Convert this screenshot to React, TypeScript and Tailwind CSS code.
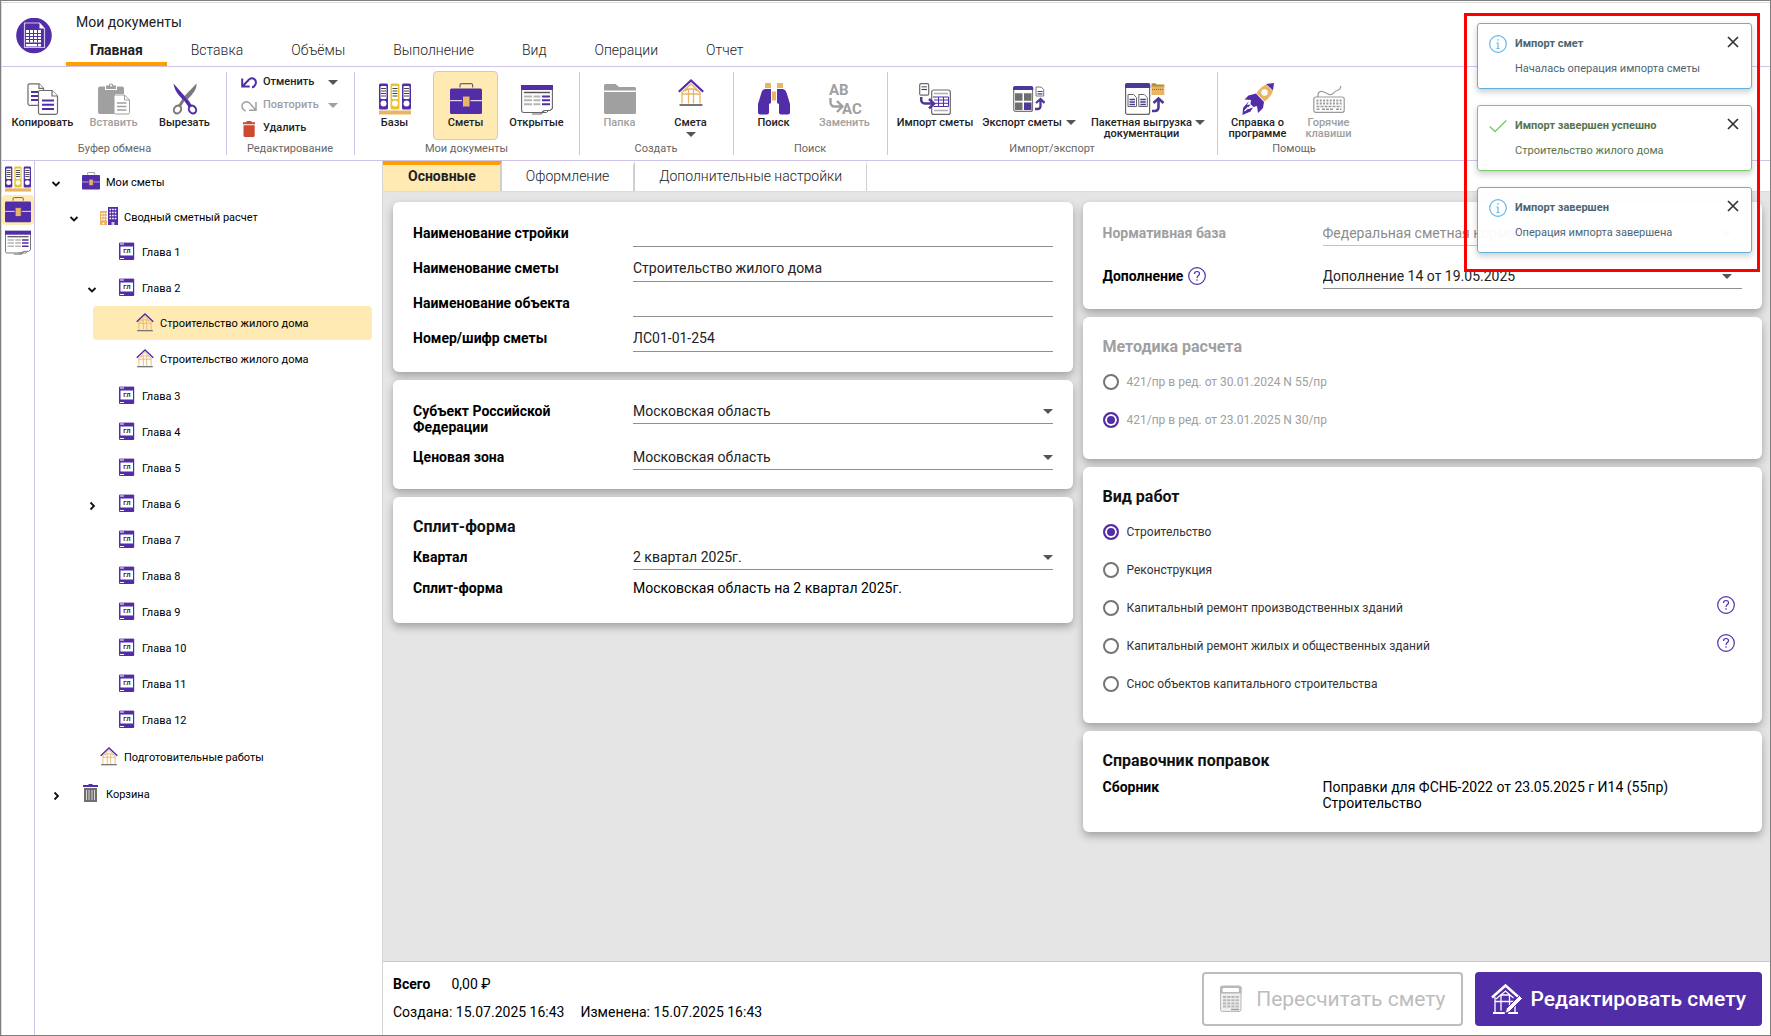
import { useState, type ReactNode } from "react";
import clsx from "clsx";

/* ---------- icons ---------- */

const Logo = () => (
  <svg viewBox="0 0 36 36" className="size-9">
    <circle cx="18" cy="17.5" r="17.8" fill="#512da8" />
    <path d="M8.5 5h15l5 5.5v19h-20z" fill="none" stroke="#cfc3ea" strokeWidth="1.2" />
    <path d="M23.5 5l5 5.5h-5z" fill="#fff" />
    <path d="M10 12h15v12.5h-15zM10 26h15v2.5h-15z" fill="#fff" />
    <path
      d="M10 15.5h15M10 18.5h15M10 21.5h15M13.5 12v12.5M17.5 12v12.5M21.5 12v12.5M21.5 26v2.5"
      stroke="#512da8"
      strokeWidth="1"
    />
  </svg>
);

const CopyIcon = () => (
  <svg viewBox="0 0 32 32" className="size-8" fill="#fff" stroke="#6b6b6b" strokeWidth="1.2">
    <path d="M2.500 .8h9.500l4.500 4.500v17h-14a1.500 1.500 0 0 1-1.500-1.500v-18.500a1.500 1.500 0 0 1 1.500-1.500z" />
    <path d="M12 .8v4.500h4.500" />
    <path d="M4 9h7M4 13h7M4 17h7" stroke="#512da8" strokeWidth="2" />
    <path d="M13 7.500h12l5.500 5.500v16.500a1.800 1.800 0 0 1-1.800 1.800h-15.700a1.500 1.500 0 0 1-1.500-1.500v-20.800a1.500 1.500 0 0 1 1.500-1.500z" />
    <path d="M25 7.500v5.500h5.500" />
    <path d="M15 17.500h12M15 21.800h12M15 26h12" stroke="#512da8" strokeWidth="2" />
  </svg>
);

const PasteIcon = () => (
  <svg viewBox="0 0 32 32" className="size-8">
    <path d="M0 5.500a2 2 0 0 1 2-2h5v3.500h12v-3.500h5a2 2 0 0 1 2 2v5.500h-9v20h-15a2 2 0 0 1-2-2z" fill="#a0a0a0" />
    <path d="M8 6v-3.500h2.500a2.600 2.600 0 0 1 5 0h2.500v3.500z" fill="#a0a0a0" />
    <circle cx="13" cy="2.5" r="1" fill="#fff" />
    <path d="M17.500 12h9l5 5v12.500a1.500 1.500 0 0 1-1.500 1.500h-12.500a1.500 1.500 0 0 1-1.500-1.500v-16a1.500 1.500 0 0 1 1.500-1.500z" fill="#fff" stroke="#a0a0a0" />
    <path d="M26.500 12v5h5" fill="none" stroke="#a0a0a0" />
    <path d="M19 20h9.500M19 23.500h9.500M19 27h9.500" stroke="#a0a0a0" strokeWidth="1.5" />
  </svg>
);

const CutIcon = () => (
  <svg viewBox="0 0 32 32" className="size-8">
    <path d="M27.500 .5c.5 5-3 10-9 16l-3-3.500z" fill="#7a7a7a" />
    <path d="M15 16l-4.500 7" stroke="#7a7a7a" strokeWidth="3" />
    <ellipse cx="8.5" cy="26.5" rx="3.4" ry="4.2" transform="rotate(35 8.5 26.5)" fill="none" stroke="#7a7a7a" strokeWidth="2" />
    <path d="M4.500 .5l15.500 17.500 3 5-3 1.500-5-7c-6-5.500-9.500-10-10.500-17z" fill="#512da8" />
    <ellipse cx="23.5" cy="26.5" rx="3.4" ry="4.2" transform="rotate(-35 23.5 26.5)" fill="none" stroke="#512da8" strokeWidth="2" />
  </svg>
);

const UndoIcon = () => (
  <svg viewBox="0 0 16 14" className="h-3.5 w-4" fill="none" stroke="currentColor" strokeWidth="2">
    <path d="M1.200 2.500v8h7.500M1.800 10l6.200-6.500c4-3 8 .5 6.600 4.500-.6 2-1.800 3-3.600 3.500" />
  </svg>
);

const RedoIcon = () => (
  <svg viewBox="0 0 16 14" className="h-3.5 w-4" fill="none" stroke="currentColor" strokeWidth="1.5">
    <path d="M15 3v8.200H8M14.500 10.800L8.500 4c-4-3-8.500.5-7.300 4.500.6 2 1.500 2.800 3.300 3.500" />
  </svg>
);

const DeleteIcon = () => (
  <svg viewBox="0 0 14 16" className="h-4 w-3.5" fill="#cd4a30">
    <path d="M4.500 0h5v1.200h3.500v2h-12v-2h3.500zM1.500 4.200h11.200v10.300a1.500 1.500 0 0 1-1.500 1.500h-8.200a1.500 1.500 0 0 1-1.500-1.500z" />
  </svg>
);

const Binder = ({ x, color }: { x: number; color: string }) => (
  <g transform={`translate(${x} 0)`}>
    <rect y=".5" width="9" height="26" rx="1.5" fill={color} />
    <rect x="1.5" y="3" width="6" height="13" rx="1" fill="#fff" />
    <path d="M2 5.500h5M2 8h5M2 10.500h5M2 13h5" stroke="#444" strokeWidth="1.2" />
    <circle cx="4.5" cy="20.5" r="3" fill="#fff" />
  </g>
);

const BindersIcon = ({ className }: { className: string }) => (
  <svg viewBox="0 0 32 32" className={className}>
    <Binder x={0} color="#512da8" />
    <Binder x={11.5} color="#ebc32d" />
    <Binder x={23} color="#512da8" />
    <rect y="27.5" width="32" height="4" fill="#e9b565" />
  </svg>
);

const BriefcaseIcon = ({ className }: { className: string }) => (
  <svg viewBox="0 0 32 32" className={className}>
    <path d="M10 4.500v-2.500a1.300 1.300 0 0 1 1.300-1.300h10a1.300 1.300 0 0 1 1.300 1.300v2.500" fill="none" stroke="#666" strokeWidth="1.2" />
    <rect y="5.5" width="32" height="25.5" rx="1.5" fill="#512da8" />
    <path d="M0 17.700h32" stroke="#fff" strokeWidth="1" />
    <rect x="12.5" y="13" width="7.5" height="11" rx="1" fill="#e9b565" stroke="#512da8" />
  </svg>
);

const OpenedIcon = ({ className }: { className: string }) => (
  <svg viewBox="0 0 32 32" className={className}>
    <path d="M.6 5v22.500a2 2 0 0 0 2 2h18l3-2h5.500l2.300-2v-20.500z" fill="#fff" stroke="#666" strokeWidth="1.1" />
    <path d="M11 31h9.500l2-3.500M17 29.500h8.500l2-2" fill="none" stroke="#666" />
    <path d="M0 2h32v5h-32z" fill="#512da8" />
    <path d="M3 9.500h26" stroke="#555" strokeWidth="1.5" />
    <path d="M3 13.500h8M12.500 13.500h7M3 17.300h8M12.500 17.300h7M3 21.200h8M12.500 21.200h7" stroke="#b5b5b5" strokeWidth="2" />
    <path d="M21 13.500h8M21 17.300h8M21 21.200h8" stroke="#512da8" strokeWidth="2" />
  </svg>
);

const FolderIcon = () => (
  <svg viewBox="0 0 32 32" className="size-8" fill="#a0a0a0">
    <path d="M0 2.500a1.500 1.500 0 0 1 1.500-1.500h10l3.500 3h15.500a1.500 1.500 0 0 1 1.500 1.500v2h-32z" />
    <path d="M0 9h32v20.500a1.500 1.500 0 0 1-1.500 1.500h-29a1.500 1.500 0 0 1-1.500-1.500z" />
  </svg>
);

const HouseIcon = ({ className, viewBox = "0 0 26 28" }: { className: string; viewBox?: string }) => (
  <svg viewBox={viewBox} className={clsx("overflow-visible", className)} fill="none">
    <path d="M4 12.500v12M22 12.500v12M4 15h18M10.500 10v14.500M15.500 10v14.500M4.500 13l8.500-8 8.500 8M7 12l3-2h6l3 2" stroke="#e9b565" strokeWidth="1.3" />
    <path d="M.8 12.800L13 1.500l12.200 11.300" stroke="#512da8" strokeWidth="2.2" />
    <path d="M1.500 26h23" stroke="#777" strokeWidth="2" />
  </svg>
);

const SearchIcon = () => (
  <svg viewBox="0 0 32 32" className="size-8">
    <path d="M7 0h6v5h-6zM19 0h6v5h-6zM14 8.500h4v9h-4z" fill="#e9b565" />
    <path d="M7 6h6v14l-2 1v8.500a2 2 0 0 1-2 2h-7a2 2 0 0 1-2-2v-8.500l3.500-11.500a5 5 0 0 1 3.500-3.500zM25 6h-6v14l2 1v8.500a2 2 0 0 0 2 2h7a2 2 0 0 0 2-2v-8.500l-3.500-11.500a5 5 0 0 0-3.500-3.500z" fill="#512da8" />
  </svg>
);

const ReplaceIcon = () => (
  <svg viewBox="0 0 32 32" className="size-8 overflow-visible" fill="#a0a0a0" fontFamily="Roboto, sans-serif" fontWeight="700" fontSize="15">
    <text x="0" y="12">AB</text>
    <text x="13" y="31">AC</text>
    <path d="M1.500 15v4.500a4 4 0 0 0 4 4h7M8 18l5.500 5.500-5.500 5.500" fill="none" stroke="#a0a0a0" strokeWidth="2.4" />
  </svg>
);

const ImportIcon = () => (
  <svg viewBox="0 0 32 32" className="size-8" fill="none" stroke="#6b6b6b" strokeWidth="1.2">
    <rect x=".7" y=".7" width="9" height="11.5" rx="1.2" />
    <path d="M2.500 3.800h5.500" />
    <path d="M2.500 6.500h5.500" stroke="#512da8" />
    <rect x="12.7" y="7" width="18.6" height="24.4" rx="2" fill="#fff" />
    <path d="M15 10.500h14M15 27.500h14" stroke="#b0b0b0" strokeWidth="1.5" />
    <path d="M14 14h15.500v9.500h-15M15 17h14.500M15 20.300h14.500M19.500 14v9.500M24.500 14v9.500" stroke="#512da8" strokeWidth="1" />
    <path d="M2.200 14v3a3.500 3.500 0 0 0 3.500 3.500h8M10 16l5 4.700-5 4.700" stroke="#4e3796" strokeWidth="2.5" />
  </svg>
);

const ExportIcon = () => (
  <svg viewBox="0 0 32 32" className="size-8">
    <rect x=".7" y="4" width="18.8" height="24.4" rx="2" fill="#fff" stroke="#777" strokeWidth="1.2" />
    <path d="M0 7v-2a2 2 0 0 1 2-2h16.300a2 2 0 0 1 2 2v2z" fill="#4e3796" />
    <path d="M2 10.300h7.500v7.500h-7.500zM11 10.300h7.500v7.500h-7.500zM2 19.500h7.500v7.500h-7.500z" fill="#6f6f6f" />
    <path d="M11 19.500h7.500v7.500h-7.500z" fill="#4e3796" />
    <path d="M23 4h5l2.700 2.500v6.500h-7.700z" fill="#fff" stroke="#777" />
    <path d="M24.500 8.500h5M24.500 10.800h5" stroke="#4e3796" strokeWidth="1.2" />
    <path d="M22 26h2.500c2.500 0 3-1.500 3-3v-6M23 20l4.500-4 4 4" fill="none" stroke="#4e3796" strokeWidth="2.3" />
  </svg>
);

const BatchIcon = () => (
  <svg viewBox="0 0 40 32" className="h-8 w-10">
    <rect x=".6" y=".7" width="24" height="30.7" rx="2" fill="#fff" stroke="#666" strokeWidth="1.2" />
    <path d="M0 5v-3a2 2 0 0 1 2-2h21.200a2 2 0 0 1 2 2v3z" fill="#4e3796" />
    <path d="M3 11.500h5.500l3 3v9h-8.500zM13.800 11.500h5.500l3 3v9h-8.500z" fill="#fff" stroke="#666" />
    <path d="M4.500 16.500h5.500M4.500 19h5.500M4.500 21.500h5.500M15.300 16.500h5.500M15.300 19h5.500M15.300 21.500h5.500" stroke="#4e3796" strokeWidth="1.3" />
    <path d="M26.500 .3h4l1.300 1.300h7.500v3h-12.800z" fill="#b98d3d" />
    <path d="M26.500 3.500h12.800v8.500h-12.800z" fill="#e9b565" />
    <path d="M27 6.500h12" stroke="#866b38" strokeDasharray="1 1" />
    <path d="M27 28h2.500c3.500 0 4-2 4-4v-8M28.500 20l5-4.500 5 4.500" fill="none" stroke="#4e3796" strokeWidth="2.6" />
  </svg>
);

const RocketIcon = () => (
  <svg viewBox="0 0 32 32" className="size-8">
    <path d="M32 0l-1 7.500-7-6.500z" fill="#512da8" />
    <path d="M24 1.500l7 6.500c-1.500 4-4.500 8-8.500 10.500l-8-8.500c2.500-4 6-7 9.500-8.500z" fill="#e9b565" />
    <circle cx="22.5" cy="9.5" r="3.2" fill="#fff" />
    <path d="M14 10.500l8 8.500-1 6-5 5-1-7-3.500 1-3-3 .5-4-6.500-.5 4-4z" fill="#512da8" />
    <path d="M7 18l-2 4 3.500-.5-3.500 5 6-2-2.500 4-8 3.500 .5-7z" fill="#512da8" />
    <path d="M2.500 28l4-4" stroke="#fff" strokeWidth="1.2" />
  </svg>
);

const KeyboardIcon = () => (
  <svg viewBox="0 0 32 32" className="size-8" fill="none" stroke="#9a9a9a" strokeWidth="1.2">
    <path d="M5 14v-2.500c0-3 3.500-4 6-2.500l5 2.500c4 1.500 5-3.500 8-4 2.500-.5 3.500-1.500 3.800-4.500" />
    <rect x=".8" y="14" width="30.4" height="15.3" rx="2" />
    <path d="M3.500 17.500h25M3.500 20.500h25" strokeWidth="2" strokeDasharray="2 1.3" />
    <path d="M3.500 23.500h25M3.500 26.200h3M9 26.200h11M23 26.200h5.500" strokeWidth="1.6" strokeDasharray="3 1" />
  </svg>
);

const BuildingsIcon = () => (
  <svg viewBox="0 0 18 18" className="size-[18px]">
    <path d="M0 4h7v14h-7z" fill="#e9b565" />
    <path d="M8 0h10v18h-10z" fill="#512da8" />
    <path d="M1 6.500h6M1 9.500h6M1 12.500h6M2.500 16.500h2.500" stroke="#fff" strokeWidth="1.6" strokeDasharray="1.6 .8" />
    <path d="M9.500 2.500h7.500M9.500 5.500h7.500M9.500 8.500h7.500M9.500 11.500h7.500" stroke="#fff" strokeWidth="1.6" strokeDasharray="1.6 1" />
    <path d="M11.500 15h3v3h-3z" fill="#cfc3ea" />
  </svg>
);

const ChapterIcon = () => (
  <svg viewBox="0 0 18 18" className="size-[18px]">
    <rect x="1" y=".5" width="15.2" height="17.5" rx="1" fill="#512da8" />
    <path d="M1 0h15" stroke="#cfc3ea" />
    <path d="M2 2h4M2 16.500h4" stroke="#fff" strokeWidth="1.2" />
    <rect x="2.5" y="4.5" width="12.5" height="9" fill="#fff" />
    <text x="8.8" y="11" textAnchor="middle" fontSize="6" fontWeight="700" fontFamily="Roboto, sans-serif" fill="#222">ГЛ</text>
  </svg>
);

const TrashIcon = () => (
  <svg viewBox="0 0 18 18" className="size-[18px]">
    <path d="M1 1h5.500v-1h4v1h5.500v2h-15z" fill="#512da8" />
    <path d="M2 4h13v14h-13z" fill="#6e6e6e" />
    <path d="M4.500 6v10M7 6v10M10 6v10M12.500 6v10" stroke="#d5d5d5" />
  </svg>
);

const CalculatorIcon = () => (
  <svg viewBox="0 0 22 28" className="h-7 w-[22px]">
    <rect x=".5" y="1" width="20.5" height="25.5" rx="2" fill="#eee" stroke="#b8b8b8" />
    <path d="M0 3a2 2 0 0 1 2-2h17.500a2 2 0 0 1 2 2v5.500h-21.500z" fill="#b8b8b8" />
    <rect x="2.5" y="3" width="16.5" height="4" rx="1" fill="#fff" />
    <path d="M3 12h16M3 15.200h16M3 18.400h16M3 21.600h16" stroke="#b8b8b8" strokeWidth="2" strokeDasharray="3.2 1" />
    <path d="M11 24.500h8" stroke="#999" strokeWidth="1.4" />
  </svg>
);

const EditHouseIcon = () => (
  <svg viewBox="0 0 32 32" className="size-8" fill="none" stroke="#fff">
    <path d="M1 14.500L14.500 2.500l13.500 12" strokeWidth="2.5" />
    <path d="M4 14v15M24 23v6M4 18.500h19M10 11v16.500M18.500 11v14M5 16l9.500-8 8 7M10 12h9" strokeWidth="1.3" />
    <path d="M2 30h12M17 30h10" strokeWidth="2" />
    <path d="M14 30.500l1.500-5 13-13 3 3-13 13z" fill="#fff" stroke="#512da8" strokeWidth="1" />
  </svg>
);

const HelpIcon = () => (
  <svg viewBox="0 0 18 18" className="size-[18px]" fill="none" stroke="#512da8" strokeWidth="1.2">
    <circle cx="9" cy="9" r="8.3" />
    <path d="M6.500 7c0-3.400 5-3.200 5-.3 0 1.800-2.500 2-2.500 4.300" />
    <path d="M9 12.300v1.500" />
  </svg>
);

const InfoIcon = () => (
  <svg viewBox="0 0 18 18" className="size-[18px]" fill="none" stroke="#67b7e1" strokeWidth="1.2">
    <circle cx="9" cy="9" r="8.3" />
    <path d="M9 4v1.800M7.500 8h1.500v5.500M7.500 13.500h3" />
  </svg>
);

const CheckIcon = () => (
  <svg viewBox="0 0 18 18" className="size-[18px]" fill="none" stroke="#72c65c" strokeWidth="1.3">
    <path d="M.8 9.500l5.200 5.200L17.300 3.500" />
  </svg>
);

const Caret = () => (
  <svg viewBox="0 0 10 5" className="h-[5px] w-2.5 shrink-0" fill="currentColor">
    <path d="M0 0h10l-5 5z" />
  </svg>
);

/* ---------- ribbon ---------- */

interface RibbonButtonProps {
  icon: ReactNode;
  label: ReactNode;
  width?: string;
  active?: boolean;
  disabled?: boolean;
}

const RibbonButton = ({ icon, label, width = "w-[65px]", active, disabled }: RibbonButtonProps) => (
  <button
    type="button"
    disabled={disabled}
    className={clsx(
      "flex h-[69px] flex-col items-center gap-0.5 rounded border pt-[11px] text-[11px] leading-[11px] font-medium whitespace-nowrap",
      width,
      active ? "border-[#cfc3ea] bg-[#ffeab3]" : "border-transparent",
      disabled ? "text-[#a0a0a0]" : "text-[#222]"
    )}
  >
    {icon}
    {label}
  </button>
);

const RibbonGroup = ({ title, children }: { title: string; children: ReactNode }) => (
  <>
    <section className="flex flex-col pt-1 pr-2.5 pl-[7px] first:pr-[9px] first:pl-2">
      <div className="flex gap-1.5">{children}</div>
      <div className="pl-0.5 text-center text-[11px] leading-[18px] text-[#666]">{title}</div>
    </section>
    <div className="my-[5px] w-px bg-[#cfc3ea] last:hidden" />
  </>
);

const Ribbon = () => (
  <div className="flex h-[94px] shrink-0 border-b border-[#cfc3ea]">
    <RibbonGroup title="Буфер обмена">
      <RibbonButton icon={<CopyIcon />} label="Копировать" />
      <RibbonButton icon={<PasteIcon />} label="Вставить" disabled />
      <RibbonButton icon={<CutIcon />} label="Вырезать" />
    </RibbonGroup>
    <RibbonGroup title="Редактирование">
      <div className="flex h-[69px] w-[110px] flex-col pl-[7px] text-[11px] font-medium text-[#222]">
        <button type="button" className="flex h-[23px] items-center">
          <span className="w-[22px] text-[#512da8]"><UndoIcon /></span>
          <span className="w-[65px] text-left">Отменить</span>
          <span className="text-[#555]"><Caret /></span>
        </button>
        <button type="button" disabled className="flex h-[23px] items-center text-[#a0a0a0]">
          <span className="w-[22px]"><RedoIcon /></span>
          <span className="w-[65px] text-left">Повторить</span>
          <Caret />
        </button>
        <button type="button" className="flex h-[23px] items-center">
          <span className="w-[22px] pl-px"><DeleteIcon /></span>
          Удалить
        </button>
      </div>
    </RibbonGroup>
    <RibbonGroup title="Мои документы">
      <RibbonButton icon={<BindersIcon className="size-8" />} label="Базы" />
      <RibbonButton icon={<BriefcaseIcon className="size-8" />} label="Сметы" active />
      <RibbonButton icon={<OpenedIcon className="size-8" />} label="Открытые" />
    </RibbonGroup>
    <RibbonGroup title="Создать">
      <RibbonButton icon={<FolderIcon />} label="Папка" disabled />
      <RibbonButton
        icon={<HouseIcon className="size-8" viewBox="-3 4 32 32" />}
        label={
          <span className="flex flex-col items-center gap-1">
            Смета
            <span className="text-[#555]"><Caret /></span>
          </span>
        }
      />
    </RibbonGroup>
    <RibbonGroup title="Поиск">
      <RibbonButton icon={<SearchIcon />} label="Поиск" />
      <RibbonButton icon={<ReplaceIcon />} label="Заменить" disabled />
    </RibbonGroup>
    <RibbonGroup title="Импорт/экспорт">
      <RibbonButton icon={<ImportIcon />} label="Импорт сметы" width="w-[80px]" />
      <RibbonButton
        icon={<ExportIcon />}
        width="w-[96px]"
        label={
          <span className="flex items-center gap-1">
            Экспорт сметы
            <span className="text-[#555]"><Caret /></span>
          </span>
        }
      />
      <RibbonButton
        icon={<BatchIcon />}
        width="w-[124px]"
        label={
          <span className="flex gap-[3px] pl-1.5">
            <span>
              Пакетная выгрузка
              <br />
              документации
            </span>
            <span className="pt-[3px] text-[#555]"><Caret /></span>
          </span>
        }
      />
    </RibbonGroup>
    <RibbonGroup title="Помощь">
      <RibbonButton icon={<RocketIcon />} label={<span>Справка о<br />программе</span>} />
      <RibbonButton icon={<KeyboardIcon />} label={<span>Горячие<br />клавиши</span>} disabled />
    </RibbonGroup>
  </div>
);

/* ---------- header ---------- */

const MENU = ["Главная", "Вставка", "Объёмы", "Выполнение", "Вид", "Операции", "Отчет"];

const Header = () => (
  <header className="flex shrink-0 border-b border-[#cfc3ea]">
    <div className="w-16 pt-[15px] pl-[14px]">
      <Logo />
    </div>
    <div>
      <h1 className="pt-2.5 pl-2.5 text-sm leading-[18px] text-[#222]">Мои документы</h1>
      <nav className="flex">
        {MENU.map((item, index) => (
          <a
            key={item}
            href="#"
            className={clsx(
              "border-b-4 px-6 pt-[7px] text-sm leading-6",
              index === 0 ? "border-[#ff9e00] font-bold text-[#222]" : "border-transparent font-light text-[#222]"
            )}
          >
            {item}
          </a>
        ))}
      </nav>
    </div>
  </header>
);

/* ---------- tree ---------- */

interface TreeItem {
  id: string;
  label: string;
  icon: ReactNode;
  state?: "open" | "closed";
  children?: TreeItem[];
}

const chapter = (n: number, extra: Partial<TreeItem> = {}): TreeItem => ({
  id: `chapter-${n}`,
  label: `Глава ${n}`,
  icon: <ChapterIcon />,
  ...extra,
});

const house = <HouseIcon className="h-[19px] w-[18px]" />;

const TREE: TreeItem[] = [
  {
    id: "root",
    label: "Мои сметы",
    icon: <BriefcaseIcon className="size-[18px]" />,
    state: "open",
    children: [
      {
        id: "summary",
        label: "Сводный сметный расчет",
        icon: <BuildingsIcon />,
        state: "open",
        children: [
          chapter(1),
          chapter(2, {
            state: "open",
            children: [
              { id: "house-1", label: "Строительство жилого дома", icon: house },
              { id: "house-2", label: "Строительство жилого дома", icon: house },
            ],
          }),
          chapter(3),
          chapter(4),
          chapter(5),
          chapter(6, { state: "closed" }),
          chapter(7),
          chapter(8),
          chapter(9),
          chapter(10),
          chapter(11),
          chapter(12),
        ],
      },
      { id: "prep", label: "Подготовительные работы", icon: house },
    ],
  },
  { id: "trash", label: "Корзина", icon: <TrashIcon />, state: "closed" },
];

interface TreeNodeProps {
  item: TreeItem;
  selected: string;
  onSelect: (id: string) => void;
}

const TreeNode = ({ item, selected, onSelect }: TreeNodeProps) => (
  <li className="flex flex-col">
    <div className={clsx("my-px flex h-[34px] items-center rounded-sm", selected === item.id && "bg-[#ffeab3]")}>
      <span className="flex w-[34px] shrink-0 justify-center pt-[3px]">
        {item.state && (
          <button type="button" aria-label={item.label} className="flex size-4 items-center justify-center">
            <svg viewBox="0 0 10 10" className="size-2.5" fill="none" stroke="#111" strokeWidth="1.8">
              <path d={item.state === "open" ? "M1.500 3l3.500 3.500L8.500 3" : "M3.500 1.500L7 5 3.500 8.500"} />
            </svg>
          </button>
        )}
      </span>
      <button
        type="button"
        onClick={() => onSelect(item.id)}
        className="ml-[9px] flex items-center gap-1.5 text-[11px] whitespace-nowrap text-black"
      >
        <span className="pb-0.5">{item.icon}</span>
        <span className="pt-0.5">{item.label}</span>
      </button>
    </div>
    {item.children && (
      <ul className="-mt-px mb-px pl-[18px]">
        {item.children.map((child) => (
          <TreeNode key={child.id} item={child} selected={selected} onSelect={onSelect} />
        ))}
      </ul>
    )}
  </li>
);

const Sidebar = () => {
  const [selected, setSelected] = useState("house-1");

  return (
    <>
      <div className="flex w-[33px] shrink-0 flex-col border-r border-[#cfc3ea] pt-1">
        <button type="button" aria-label="Базы" className="flex h-[30px] items-center justify-center pb-0.5">
          <BindersIcon className="size-[26px]" />
        </button>
        <button type="button" aria-label="Сметы" className="flex h-[30px] items-center justify-center rounded bg-[#ffeab3]">
          <BriefcaseIcon className="size-[26px]" />
        </button>
        <button type="button" aria-label="Открытые" className="mt-0.5 flex h-[30px] items-center justify-center">
          <OpenedIcon className="size-[26px]" />
        </button>
      </div>
      <aside className="w-[347px] shrink-0 pt-[3px] pr-2.5 pl-1">
        <ul>
          {TREE.map((item) => (
            <TreeNode key={item.id} item={item} selected={selected} onSelect={setSelected} />
          ))}
        </ul>
      </aside>
    </>
  );
};

/* ---------- form ---------- */

const Card = ({ children, className = "pb-5" }: { children: ReactNode; className?: string }) => (
  <section className={clsx("rounded-md bg-white px-5 pt-2.5 shadow-[0_4px_8px_rgba(0,0,0,0.3)]", className)}>
    {children}
  </section>
);

const CardTitle = ({ children, muted }: { children: ReactNode; muted?: boolean }) => (
  <h3 className={clsx("pt-2.5 text-base leading-5 font-bold", muted ? "text-[#a0a0a0]" : "text-[#111]")}>{children}</h3>
);

interface FieldProps {
  id?: string;
  label: string;
  help?: boolean;
  muted?: boolean;
  className?: string;
  children: ReactNode;
}

const Field = ({ id, label, help, muted, className = "pt-3", children }: FieldProps) => (
  <div className={clsx("flex items-start text-sm", className)}>
    <div className="flex w-[220px] shrink-0 gap-[5px]">
      <label
        htmlFor={id}
        className={clsx("max-w-[160px] py-px leading-4 font-bold", muted ? "text-[#a0a0a0]" : "text-black")}
      >
        {label}
      </label>
      {help && <button type="button" aria-label="Справка"><HelpIcon /></button>}
    </div>
    <div className="min-w-0 flex-1">{children}</div>
  </div>
);

const TextInput = ({ id, value }: { id: string; value: string }) => (
  <input
    id={id}
    type="text"
    defaultValue={value}
    className="block h-[23px] w-full border-b border-[#8f8f8f] pb-1 text-sm text-[#222] outline-none"
  />
);

interface SelectInputProps {
  id: string;
  value: string;
  disabled?: boolean;
  caret?: string;
}

const SelectInput = ({ id, value, disabled, caret = "right-0" }: SelectInputProps) => (
  <div className={clsx("relative", disabled ? "text-[#8c8c8c]" : "text-[#222]")}>
    <select
      id={id}
      disabled={disabled}
      className={clsx(
        "block h-[22px] w-full appearance-none border-b pb-[3px] text-sm leading-[18px] outline-none disabled:opacity-100",
        disabled ? "border-[#c4c4c4]" : "border-[#8f8f8f]"
      )}
    >
      <option>{value}</option>
    </select>
    <span className={clsx("pointer-events-none absolute top-[7px]", caret, disabled ? "text-[#aaa]" : "text-[#555]")}>
      <Caret />
    </span>
  </div>
);

interface RadioRowProps {
  name: string;
  label: string;
  checked?: boolean;
  disabled?: boolean;
  help?: boolean;
}

const RadioRow = ({ name, label, checked, disabled, help }: RadioRowProps) => (
  <div className="flex h-[38px] items-center justify-between pr-[7px]">
    <label className={clsx("flex items-center gap-2 text-xs", disabled ? "text-[#a0a0a0]" : "text-[#333]")}>
      <input
        type="radio"
        name={name}
        defaultChecked={checked}
        disabled={disabled}
        className="size-4 appearance-none rounded-full border-2 border-[#757575] checked:border-[#512da8] checked:bg-[#512da8] checked:shadow-[inset_0_0_0_2px_#fff]"
      />
      {label}
    </label>
    {help && <button type="button" aria-label="Справка" className="pb-1.5"><HelpIcon /></button>}
  </div>
);

const TABS = ["Основные", "Оформление", "Дополнительные настройки"];

const Content = () => (
  <main className="flex min-w-0 flex-1 flex-col border-l border-[#d5d5d5]">
    <div role="tablist" className="flex h-[31px] shrink-0 border-b border-[#dcdcdc]">
      {TABS.map((tab, index) => (
        <button
          key={tab}
          type="button"
          role="tab"
          aria-selected={index === 0}
          className={clsx(
            "border-t-4 border-r-2 border-r-[#cfcfcf] px-6 pb-1 text-sm first:pl-[25px] last:border-r",
            index === 0 ? "border-t-[#ff9e00] bg-[#ffeab3] font-bold text-[#222]" : "border-t-transparent font-light text-[#222]"
          )}
        >
          {tab}
        </button>
      ))}
    </div>

    <div className="grid flex-1 grid-cols-2 items-start gap-2.5 bg-[#e5e5e5] py-2.5 pr-2 pl-2.5">
      <div className="flex flex-col gap-2">
        <Card>
          <Field id="site" label="Наименование стройки"><TextInput id="site" value="" /></Field>
          <Field id="estimate" label="Наименование сметы"><TextInput id="estimate" value="Строительство жилого дома" /></Field>
          <Field id="object" label="Наименование объекта"><TextInput id="object" value="" /></Field>
          <Field id="code" label="Номер/шифр сметы"><TextInput id="code" value="ЛС01-01-254" /></Field>
        </Card>
        <Card className="pb-[19px]">
          <Field id="region" label="Субъект Российской Федерации"><SelectInput id="region" value="Московская область" /></Field>
          <Field id="zone" label="Ценовая зона"><SelectInput id="zone" value="Московская область" /></Field>
        </Card>
        <Card className="pb-[26px]">
          <CardTitle>Сплит-форма</CardTitle>
          <Field id="quarter" label="Квартал" className="pt-[11px]"><SelectInput id="quarter" value="2 квартал 2025г." /></Field>
          <Field label="Сплит-форма" className="pt-[9px]">
            <p className="leading-[18px]">Московская область на 2 квартал 2025г.</p>
          </Field>
        </Card>
      </div>

      <div className="flex flex-col gap-2">
        <Card>
          <Field id="base" label="Нормативная база" muted>
            <SelectInput id="base" value="Федеральная сметная нормативная база ФСНБ-2022" disabled caret="right-2.5" />
          </Field>
          <Field id="addition" label="Дополнение" help className="pt-[21px]">
            <SelectInput id="addition" value="Дополнение 14 от 19.05.2025" caret="right-2.5" />
          </Field>
        </Card>
        <Card>
          <CardTitle muted>Методика расчета</CardTitle>
          <div className="pt-1.5">
            <RadioRow name="method" label="421/пр в ред. от 30.01.2024 N 55/пр" disabled />
            <RadioRow name="method" label="421/пр в ред. от 23.01.2025 N 30/пр" disabled checked />
          </div>
        </Card>
        <Card>
          <CardTitle>Вид работ</CardTitle>
          <div className="pt-1.5">
            <RadioRow name="work" label="Строительство" checked />
            <RadioRow name="work" label="Реконструкция" />
            <RadioRow name="work" label="Капитальный ремонт производственных зданий" help />
            <RadioRow name="work" label="Капитальный ремонт жилых и общественных зданий" help />
            <RadioRow name="work" label="Снос объектов капитального строительства" />
          </div>
        </Card>
        <Card>
          <CardTitle>Справочник поправок</CardTitle>
          <Field label="Сборник" className="pt-[7px]">
            <p className="py-px leading-4">
              Поправки для ФСНБ-2022 от 23.05.2025 г И14 (55пр)
              <br />
              Строительство
            </p>
          </Field>
        </Card>
      </div>
    </div>

    <footer className="flex h-[74px] shrink-0 items-center justify-between border-t border-[#cfc3ea] pr-2 pl-2.5">
      <div className="flex flex-col gap-2.5 pb-0.5 text-sm leading-[18px] text-black">
        <div className="flex gap-[21px]">
          <b>Всего</b>
          <span>0,00 ₽</span>
        </div>
        <div className="flex gap-4">
          <span>Создана: 15.07.2025 16:43</span>
          <span>Изменена: 15.07.2025 16:43</span>
        </div>
      </div>
      <div className="flex gap-3 text-[21px]">
        <button type="button" disabled className="flex h-[54px] items-center gap-3.5 rounded border-2 border-[#bdbdbd] px-4 text-[#bdbdbd]">
          <CalculatorIcon />
          <span className="pt-0.5">Пересчитать смету</span>
        </button>
        <button type="button" className="flex h-[54px] items-center gap-[7px] rounded bg-[#512da8] px-4 font-medium text-white">
          <EditHouseIcon />
          <span className="pt-0.5">Редактировать смету</span>
        </button>
      </div>
    </footer>
  </main>
);

/* ---------- notifications ---------- */

interface Toast {
  kind: "info" | "success";
  title: string;
  text: string;
}

const TOASTS: Toast[] = [
  { kind: "info", title: "Импорт смет", text: "Началась операция импорта сметы" },
  { kind: "success", title: "Импорт завершен успешно", text: "Строительство жилого дома" },
  { kind: "info", title: "Импорт завершен", text: "Операция импорта завершена" },
];

const Toasts = () => (
  <div className="absolute top-3 right-2.5 flex w-[296px] flex-col gap-4 border-[3px] border-[#f00] pt-[7px] pr-[5px] pb-4 pl-2.5">
    {TOASTS.map((toast) => (
      <div
        key={toast.title}
        role="status"
        className={clsx(
          "flex h-[66px] items-start rounded-[3px] border bg-white/95 pt-[11px] pr-3 pl-[11px] text-[11px] shadow-[0_3px_6px_rgba(0,0,0,0.2)]",
          toast.kind === "info" ? "border-[#5fb2dd] text-[#4c6673]" : "border-[#7cc868] text-[#56754c]"
        )}
      >
        {toast.kind === "info" ? <InfoIcon /> : <CheckIcon />}
        <div className="flex-1 pt-px pl-2 leading-4">
          <div className="pb-[9px] font-bold">{toast.title}</div>
          <div>{toast.text}</div>
        </div>
        <button type="button" aria-label="Закрыть" className="pt-px">
          <svg viewBox="0 0 12 12" className="size-3" fill="none" stroke="#333" strokeWidth="1.7">
            <path d="M1 1l10 10M11 1L1 11" />
          </svg>
        </button>
      </div>
    ))}
  </div>
);

export default function App() {
  return (
    <div className="relative flex min-h-screen flex-col border border-[#7f7f7f] bg-white font-[Roboto,sans-serif]">
      <div className="mt-px flex flex-1 flex-col border-t border-l border-[#dcdcdc]">
        <Header />
        <Ribbon />
        <div className="flex flex-1">
          <Sidebar />
          <Content />
        </div>
      </div>
      <Toasts />
    </div>
  );
}
